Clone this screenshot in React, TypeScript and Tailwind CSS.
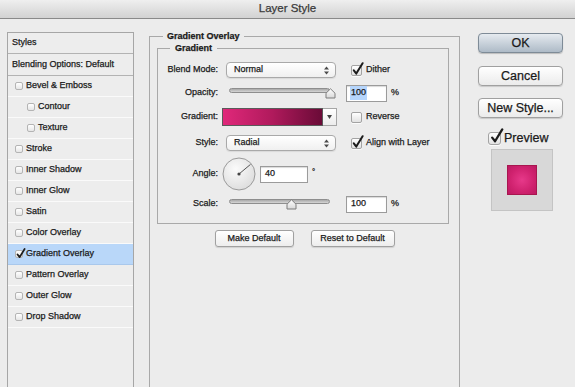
import React from "react";

const effects = [
  { name: "Bevel & Emboss" },
  { name: "Contour", sub: true },
  { name: "Texture", sub: true },
  { name: "Stroke" },
  { name: "Inner Shadow" },
  { name: "Inner Glow" },
  { name: "Satin" },
  { name: "Color Overlay" },
  { name: "Gradient Overlay", active: true },
  { name: "Pattern Overlay" },
  { name: "Outer Glow" },
  { name: "Drop Shadow" },
];

function Check({ size = "small" }: { size?: "small" | "big" }) {
  const big = size === "big";
  return (
    <svg
      className={
        big
          ? "absolute left-[1px] top-[-5px] w-[14px] h-[16px]"
          : "absolute left-[0px] top-[-4px] w-[12px] h-[14px]"
      }
      viewBox="0 0 12 14"
      fill="none"
    >
      <path
        d="M1.8 8.4 L4.3 11.6 L10.6 1.2"
        stroke="#1c1c1c"
        strokeWidth="2"
        strokeLinecap="round"
        strokeLinejoin="round"
      />
    </svg>
  );
}

function Checkbox({ checked, big }: { checked?: boolean; big?: boolean }) {
  return (
    <span
      className={
        (big ? "w-[13px] h-[13px] rounded-[3px] " : "w-[11px] h-[11px] rounded-[2px] ") +
        "block relative shrink-0 border border-[#a3a3a3] bg-gradient-to-b from-[#ffffff] to-[#e2e2e2] shadow-[0_1px_0_rgba(255,255,255,0.8)]"
      }
    >
      {checked && <Check size={big ? "big" : "small"} />}
    </span>
  );
}

function ListBox({ checked }: { checked?: boolean }) {
  return (
    <span className="relative w-[8px] h-[8px] shrink-0 rounded-[2px] border border-[#b4b4b4] bg-gradient-to-b from-[#ffffff] to-[#e6e6e6]">
      {checked && (
        <svg className="absolute left-[0px] top-[-3px] w-[10px] h-[11px]" viewBox="0 0 12 14" fill="none">
          <path d="M1.6 8.2 L4.3 11.6 L10.6 1.2" stroke="#1c1c1c" strokeWidth="2.2" strokeLinecap="round" strokeLinejoin="round" />
        </svg>
      )}
    </span>
  );
}

function Select({ value }: { value: string }) {
  return (
    <div className="ml-[8px] w-[110px] h-[16px] flex items-center justify-between pl-[7px] pr-[6px] rounded-[4px] border border-[#a9a9a9] bg-gradient-to-b from-[#ffffff] to-[#f0f0f0] shadow-[0_1px_1px_rgba(0,0,0,0.08)]">
      <span>{value}</span>
      <svg width="5" height="9" viewBox="0 0 5 9">
        <path d="M0 3.6 L2.5 0.4 L5 3.6 Z" fill="#4a4a4a" />
        <path d="M0 5.4 L2.5 8.6 L5 5.4 Z" fill="#4a4a4a" />
      </svg>
    </div>
  );
}

function Slider({ pos }: { pos: number }) {
  return (
    <div className="relative ml-[11px] w-[101px] h-[12px] shrink-0">
      <div className="absolute left-0 right-0 top-[1px] h-[5px] rounded-full border border-[#8e8e8e] bg-gradient-to-b from-[#a9a9a9] to-[#d6d6d6]" />
      <svg
        className="absolute top-[1px]"
        style={{ left: pos }}
        width="11"
        height="11"
        viewBox="0 0 11 11"
      >
        <defs>
          <linearGradient id={"th" + pos} x1="0" y1="0" x2="0" y2="1">
            <stop offset="0" stopColor="#ffffff" />
            <stop offset="1" stopColor="#d8d8d8" />
          </linearGradient>
        </defs>
        <path
          d="M1 10 L1 5.2 L5.5 0.8 L10 5.2 L10 10 Z"
          fill={"url(#th" + pos + ")"}
          stroke="#7d7d7d"
          strokeWidth="1"
          strokeLinejoin="round"
        />
      </svg>
    </div>
  );
}

function NumInput({ value, selected, w = "w-[41px]" }: { value: string; selected?: boolean; w?: string }) {
  return (
    <div
      className={
        w +
        " h-[17px] flex items-center pl-[3px] border border-[#9b9b9b] bg-white shadow-[inset_0_1px_1px_rgba(0,0,0,0.15)]"
      }
    >
      <span className={selected ? "bg-[#b5d5fc] px-[1px]" : "px-[1px]"}>{value}</span>
    </div>
  );
}

function Label({ text }: { text: string }) {
  return <span className="w-[60px] shrink-0 text-right">{text}</span>;
}

function AngleDial() {
  return (
    <svg className="ml-[4px] shrink-0" width="34" height="34" viewBox="0 0 34 34">
      <defs>
        <radialGradient id="dial" cx="0.4" cy="0.35" r="0.7">
          <stop offset="0" stopColor="#fbfbfb" />
          <stop offset="1" stopColor="#dcdcdc" />
        </radialGradient>
      </defs>
      <circle cx="17" cy="17" r="16" fill="url(#dial)" stroke="#9a9a9a" strokeWidth="1" />
      <line x1="17" y1="17" x2="28.5" y2="7.4" stroke="#555" strokeWidth="1" />
      <circle cx="17" cy="17" r="1.6" fill="#444" />
    </svg>
  );
}

function PushButton({ children, w }: { children: React.ReactNode; w: string }) {
  return (
    <div
      className={
        w +
        " h-[17px] flex items-center justify-center rounded-[3px] border border-[#a0a0a0] bg-gradient-to-b from-[#ffffff] to-[#ededed] shadow-[0_1px_1px_rgba(0,0,0,0.12)]"
      }
    >
      {children}
    </div>
  );
}

export default function App() {
  return (
    <div className="w-[575px] h-[387px] overflow-hidden bg-[#ececec] font-['Liberation_Sans',Arial,sans-serif] text-[9px] text-[#1a1a1a] [-webkit-text-stroke:0.25px] flex flex-col">
      {/* title bar */}
      <div className="h-[19px] shrink-0 flex items-center justify-center border-b border-[#8a8a8a] bg-gradient-to-b from-[#efefef] to-[#d2d2d2] text-[11.5px] text-[#3a3a3a]">
        Layer Style
      </div>

      <div className="flex items-start">
        {/* styles list */}
        <div className="ml-[7px] mt-[13px] w-[127px] h-[380px] shrink-0 border border-[#a6a6a6] bg-[#ededed]">
          <div className="h-[21px] flex items-center pl-[4px] border-b border-[#b3b3b3]">Styles</div>
          <div className="h-[22px] flex items-center pl-[4px] border-b border-[#b3b3b3]">
            Blending Options: Default
          </div>
          {effects.map((e) => (
            <div
              key={e.name}
              className={
                "h-[21px] flex items-center gap-[3px] border-b " +
                (e.sub ? "pl-[19px] " : "pl-[7px] ") +
                (e.active ? "bg-[#b9d7f9] border-[#a9c8ec]" : "border-[#fafafa]")
              }
            >
              <ListBox checked={e.active} />
              <span>{e.name}</span>
            </div>
          ))}
        </div>

        {/* gradient overlay group */}
        <fieldset className="ml-[15px] mt-[11px] w-[311px] h-[380px] shrink-0 border border-[#a9a9a9]">
          <legend className="ml-[13px] px-[4px] leading-[12px] font-bold">Gradient Overlay</legend>
          <div className="pl-[7px] pr-[10px]">
            <fieldset className="border border-[#a9a9a9] pb-[9px]">
              <legend className="ml-[12px] px-[5px] leading-[12px] font-bold">Gradient</legend>

              <div className="mt-[6px] h-[20px] flex items-center">
                <Label text="Blend Mode:" />
                <Select value="Normal" />
                <span className="ml-[15px]">
                  <Checkbox checked />
                </span>
                <span className="ml-[4px]">Dither</span>
              </div>

              <div className="mt-[3px] h-[20px] flex items-center">
                <Label text="Opacity:" />
                <Slider pos={96} />
                <span className="ml-[16px]">
                  <NumInput value="100" selected />
                </span>
                <span className="ml-[4px]">%</span>
              </div>

              <div className="mt-[4px] h-[20px] flex items-center">
                <Label text="Gradient:" />
                <div className="ml-[4px] flex h-[18px]">
                  <div className="w-[101px] h-full border border-[#5a5a5a] bg-gradient-to-r from-[#e0287a] via-[#b01a5c] to-[#6a0b37]" />
                  <div className="w-[14px] h-full flex items-center justify-center border border-l-0 border-[#a6a6a6] bg-gradient-to-b from-[#ffffff] to-[#ececec]">
                    <svg width="5" height="4" viewBox="0 0 5 4">
                      <path d="M0 0 L5 0 L2.5 4 Z" fill="#444" />
                    </svg>
                  </div>
                </div>
                <span className="ml-[14px]">
                  <Checkbox />
                </span>
                <span className="ml-[4px]">Reverse</span>
              </div>

              <div className="mt-[6px] h-[20px] flex items-center">
                <Label text="Style:" />
                <Select value="Radial" />
                <span className="ml-[15px]">
                  <Checkbox checked />
                </span>
                <span className="ml-[4px]">Align with Layer</span>
              </div>

              <div className="mt-[4px] h-[34px] flex items-center">
                <Label text="Angle:" />
                <AngleDial />
                <span className="ml-[4px]">
                  <NumInput value="40" w="w-[48px]" />
                </span>
                <span className="ml-[4px] self-start mt-[9px] text-[8px]">°</span>
              </div>

              <div className="mt-[3px] h-[20px] flex items-center">
                <Label text="Scale:" />
                <Slider pos={57} />
                <span className="ml-[16px]">
                  <NumInput value="100" />
                </span>
                <span className="ml-[4px]">%</span>
              </div>
            </fieldset>
          </div>

          <div className="mt-[6px] flex justify-center gap-[17px]">
            <PushButton w="w-[79px]">Make Default</PushButton>
            <PushButton w="w-[84px]">Reset to Default</PushButton>
          </div>
        </fieldset>

        {/* buttons */}
        <div className="ml-[18px] w-[85px] shrink-0 flex flex-col text-[12.5px]">
          <div className="mt-[14px] h-[20px] flex items-center justify-center rounded-[4px] border border-[#7e8b97] bg-gradient-to-b from-[#e6ebf0] via-[#c9d2db] to-[#aebbc7] shadow-[0_1px_1px_rgba(0,0,0,0.2)]">
            OK
          </div>
          <div className="mt-[13px] h-[20px] flex items-center justify-center rounded-[4px] border border-[#a0a0a0] bg-gradient-to-b from-[#ffffff] to-[#ebebeb] shadow-[0_1px_1px_rgba(0,0,0,0.15)]">
            Cancel
          </div>
          <div className="mt-[12px] h-[20px] flex items-center justify-center rounded-[4px] border border-[#a0a0a0] bg-gradient-to-b from-[#ffffff] to-[#ebebeb] shadow-[0_1px_1px_rgba(0,0,0,0.15)]">
            New Style...
          </div>
          <div className="mt-[10px] h-[20px] flex items-center gap-[3px] pl-[10px]">
            <Checkbox checked big />
            <span>Preview</span>
          </div>
          <div className="mt-[1px] ml-[13px] w-[62px] h-[62px] flex items-center justify-center border border-[#c4c4c4] bg-[#d8d8d8]">
            <div className="w-[30px] h-[30px] border border-[#a8164f] bg-[radial-gradient(circle,#e7398a_0%,#d0226f_60%,#bd1a62_100%)]" />
          </div>
        </div>
      </div>
    </div>
  );
}
